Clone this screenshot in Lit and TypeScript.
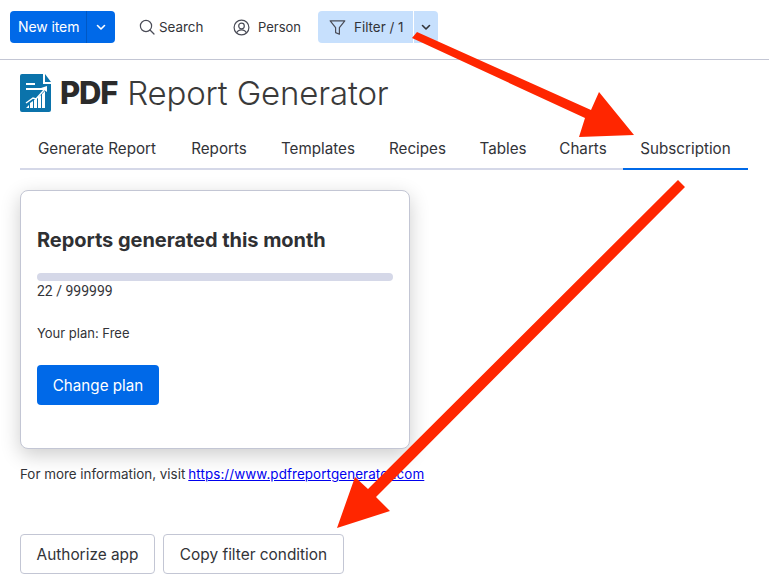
import { LitElement, html, css } from "lit";
import { customElement } from "lit/decorators.js";

const chevron = html`<svg class="chev" viewBox="0 0 12 12" width="12" height="12" fill="none" stroke="currentColor" stroke-width="1.6" stroke-linecap="round" stroke-linejoin="round"><path d="M2.5 4.5 6 8l3.5-3.5"/></svg>`;

@customElement("app-root")
export class AppRoot extends LitElement {
  static styles = css`
    :host { display: block; position: relative; width: 769px; height: 585px; overflow: hidden; background: #fff; color: #323338; font-family: Inter, "Open Sans", sans-serif; font-size: 14px; }
    * { box-sizing: border-box; }
    .topbar { height: 60px; border-bottom: 1px solid #c3c6d4; padding: 11px 10px 0; display: flex; align-items: flex-start; }
    .split { display: flex; height: 32px; width: 105px; border-radius: 4px; overflow: hidden; background: #0069e8; color: #fff; }
    .split .main { width: 77px; padding-left: 8px; display: flex; align-items: center; border-right: 1px solid #0058c4; letter-spacing: -.1px; padding-bottom: 2px; }
    .split .arrow { flex: 1; display: flex; align-items: center; justify-content: center; }
    .tool { display: flex; align-items: center; height: 32px; color: #323338; font-size: 13.4px; }
    .search { margin-left: 23px; width: 95px; gap: 3px; }
    .person { width: 85px; gap: 8px; font-size: 13px; }
    .filter { width: 95px; background: #c7e0fd; border-radius: 4px 0 0 4px; padding-left: 11px; gap: 8px; }
    .filter-arrow { width: 24px; height: 32px; margin-left: 1px; background: #c7e0fd; border-radius: 0 4px 4px 0; display: flex; align-items: center; justify-content: center; color: #323338; }
    .logo { display: flex; align-items: center; height: 54px; padding: 11px 0 0 20px; gap: 9px; }
    .logo-text { display: flex; gap: 10px; font-size: 33px; line-height: 38px; font-weight: 300; color: #3a3a3a; letter-spacing: -.15px; white-space: nowrap; }
    .logo-text b { font-weight: 800; color: #2b2b2b; font-size: 31px; letter-spacing: -1.2px; }
    .tabs { margin: 9px 21px 0 20px; height: 47px; display: grid; grid-template-columns: 154px 90px 108px 91px 80px 80px 125px; border-bottom: 2px solid #d5d8e8; }
    .tab { height: 47px; padding-top: 6px; display: flex; align-items: center; justify-content: center; font-size: 15.2px; white-space: nowrap; border-bottom: 2px solid transparent; }
    .tab.active { border-bottom-color: #0069e8; }
    .card { margin: 20px 0 0 20px; width: 390px; height: 259px; border: 1px solid #c3c6d4; border-radius: 8px; box-shadow: 0 6px 20px rgba(0,0,0,.2); padding: 36px 16px 0; background: #fff; }
    .card h2 { margin: 0; font-size: 20px; line-height: 26px; font-weight: 700; color: #2f3033; letter-spacing: -.05px; }
    .bar { margin-top: 20px; height: 8px; border-radius: 4px; background: #d5d8e8; }
    .count { font-family: Roboto, sans-serif; font-size: 14px; line-height: 20px; }
    .plan { margin-top: 22px; font-size: 13px; line-height: 20px; }
    .primary { margin-top: 22px; width: 122px; height: 40px; border-radius: 4px; background: #0069e8; color: #fff; display: flex; align-items: center; justify-content: center; font-size: 15.2px; }
    .info { margin: 15px 0 0 20px; font-size: 13.4px; line-height: 20px; white-space: nowrap; display: flex; gap: 3px; }
    .info a { color: #0000ee; text-decoration: underline; letter-spacing: .1px; }
    .actions { margin: 50px 0 0 20px; display: flex; gap: 8px; }
    .btn { height: 40px; border: 1px solid #c3c6d4; border-radius: 4px; display: flex; align-items: center; justify-content: center; font-size: 15.4px; }
    .btn.auth { width: 135px; }
    .btn.copy { width: 181px; }
    .arrows { position: absolute; left: 0; top: 0; pointer-events: none; }
  `;

  render() {
    return html`
      <div class="topbar">
        <div class="split"><div class="main">New item</div><div class="arrow">${chevron}</div></div>
        <div class="tool search">
          <svg width="18" height="18" viewBox="0 0 18 18" fill="none" stroke="#4a4c57" stroke-width="1.2" stroke-linecap="round"><circle cx="8" cy="8" r="5.6"/><path d="m12 12 4 4"/></svg>
          <span>Search</span>
        </div>
        <div class="tool person">
          <svg width="17" height="17" viewBox="0 0 17 17" fill="none" stroke="#4a4c57" stroke-width="1.2"><circle cx="8.5" cy="8.5" r="7.4"/><circle cx="8.5" cy="7" r="2.8"/><path d="M3.6 14c.8-2.2 2.6-3.2 4.9-3.2s4.1 1 4.9 3.2"/></svg>
          <span>Person</span>
        </div>
        <div class="tool filter">
          <svg width="17" height="17" viewBox="0 0 17 17" fill="none" stroke="#4a4c57" stroke-width="1.2" stroke-linejoin="round"><path d="M1.2 1.8h14.6L10.4 8.6v6.6l-3.8-1.6v-5z"/></svg>
          <span>Filter / 1</span>
        </div>
        <div class="filter-arrow">${chevron}</div>
      </div>

      <div class="logo">
        <svg width="31" height="38" viewBox="0 0 31 38">
          <path fill="#0b73ab" d="M2 0h21v10h8v26a2 2 0 0 1-2 2H2a2 2 0 0 1-2-2V2a2 2 0 0 1 2-2z"/>
          <path fill="#0b73ab" d="M25 0l6 8h-6z"/>
          <path fill="#fff" d="M6 9h9v2H6zM6 14h20v2H6z"/>
          <path fill="#fff" d="M6 34l3-3v3zM10 34v-5l3-2v7zM14 34v-8l3-2v10zM18 34v-11l3-2v13zM22 34V20l3-3v17z"/>
          <path fill="none" stroke="#fff" stroke-width="1.4" d="M6 29l7-5 3 1 8-9"/>
          <path fill="#fff" d="M21 14l6-2v6z"/>
        </svg>
        <div class="logo-text"><b>PDF</b><span>Report Generator</span></div>
      </div>

      <div class="tabs">
        <div class="tab">Generate Report</div>
        <div class="tab">Reports</div>
        <div class="tab">Templates</div>
        <div class="tab">Recipes</div>
        <div class="tab">Tables</div>
        <div class="tab">Charts</div>
        <div class="tab active">Subscription</div>
      </div>

      <div class="card">
        <h2>Reports generated this month</h2>
        <div class="bar"></div>
        <div class="count">22 / 999999</div>
        <div class="plan">Your plan: Free</div>
        <div class="primary">Change plan</div>
      </div>

      <div class="info"><span>For more information, visit</span><a href="#">https://www.pdfreportgenerator.com</a></div>

      <div class="actions">
        <div class="btn auth">Authorize app</div>
        <div class="btn copy">Copy filter condition</div>
      </div>

      <svg class="arrows" width="769" height="585" viewBox="0 0 769 585">
        <polygon fill="#ff2600" points="412,38 417,32 591,110 599,92 634,135 579,137 585,118"/>
        <polygon fill="#ff2600" points="678,180 685,187 376,497 390,511 337,528 355,477 368,489"/>
      </svg>
    `;
  }
}
